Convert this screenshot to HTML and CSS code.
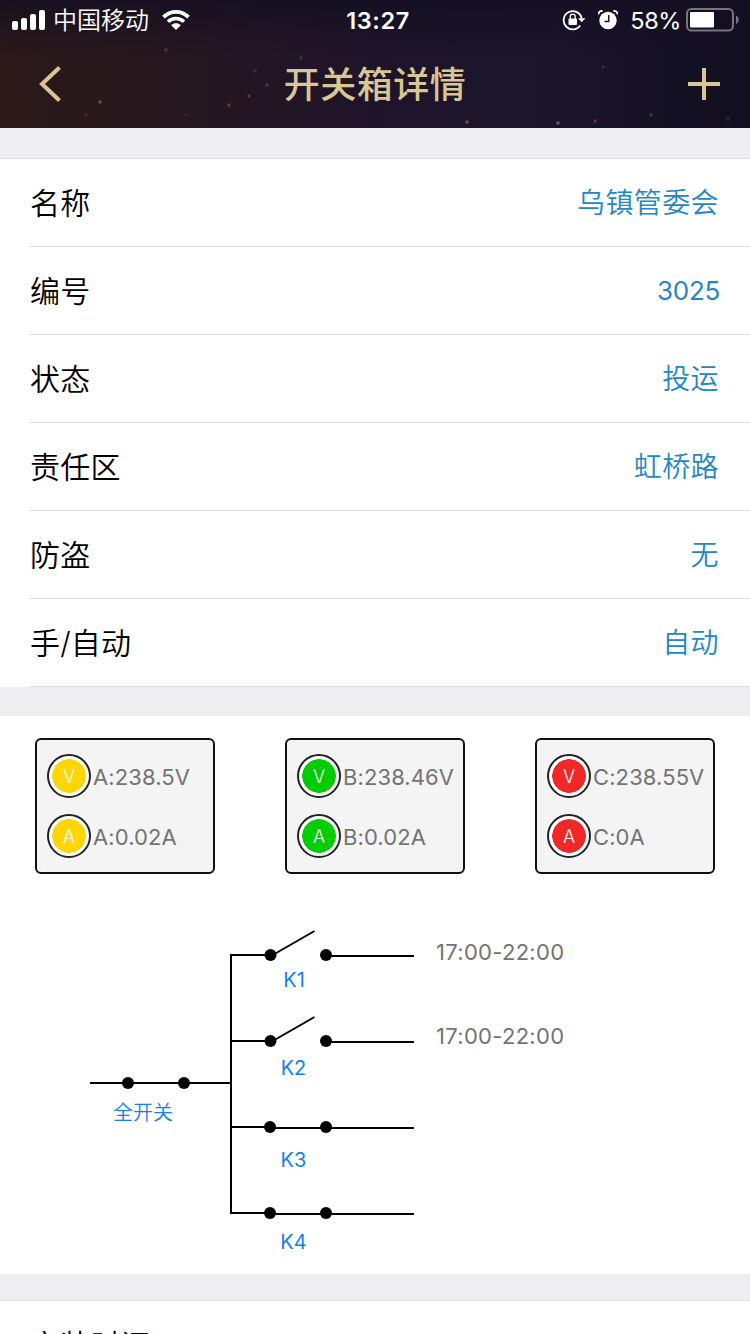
FILE: index.html
```
<!DOCTYPE html>
<html lang="zh-CN">
<head>
    <meta charset="UTF-8">
    <meta name="viewport" content="width=device-width, initial-scale=1.0">
    <title>开关箱详情</title>
    <link rel="stylesheet" href="styles.css">
</head>
<body>
    <header class="header">
        <div class="status-bar">
            <div class="status-left">
                <svg class="signal" width="34" height="20" viewBox="0 0 34 20" fill="#fff">
                    <rect x="0" y="11" width="6" height="9" rx="2"/>
                    <rect x="9" y="8" width="6" height="12" rx="2"/>
                    <rect x="18" y="4" width="6" height="16" rx="2"/>
                    <rect x="27" y="0" width="6" height="20" rx="2"/>
                </svg>
                <span class="carrier">中国移动</span>
                <svg class="wifi" width="28" height="20" viewBox="0 0 28 20">
                    <path d="M1.500 7.200C8.500 0.200 19.500 0.200 26.500 7.200" fill="none" stroke="#fff" stroke-width="3.800"/>
                    <path d="M6 11.700C10.500 7.400 17.500 7.400 22 11.700" fill="none" stroke="#fff" stroke-width="3.600"/>
                    <path d="M9.200 15.200C12 12.700 16 12.700 18.800 15.200L14 20Z" fill="#fff"/>
                </svg>
            </div>
            <span class="clock">13:27</span>
            <div class="status-right">
                <svg width="24" height="22" viewBox="0 0 24 22">
                    <path d="M18.200 16.500A9.100 9.100 0 1 1 19.700 9.500" fill="none" stroke="#fff" stroke-width="1.800"/>
                    <path d="M16 9.200H23.500L19.700 13.200Z" fill="#fff"/>
                    <rect x="6.500" y="9.500" width="8.500" height="6.500" rx="1" fill="#fff"/>
                    <path d="M8.300 10V7.500A2.450 2.450 0 0 1 13.200 7.500V10" fill="none" stroke="#fff" stroke-width="1.300"/>
                </svg>
                <svg class="alarm" width="20" height="20" viewBox="0 0 20 20">
                    <circle cx="10" cy="10.500" r="8.700" fill="#fff"/>
                    <path d="M0.600 4.400C0.500 1.800 2.200 0.600 4.600 1.100M19.400 4.400C19.500 1.800 17.800 0.600 15.400 1.100" fill="none" stroke="#fff" stroke-width="1.800"/>
                    <path d="M10.700 5V11.500H6.500" fill="none" stroke="#1a1429" stroke-width="1.500"/>
                </svg>
                <span class="percent">58%</span>
                <svg class="battery" width="53" height="24" viewBox="0 0 53 24">
                    <rect x="1" y="1" width="46" height="21.500" rx="4.500" fill="none" stroke="#77747f" stroke-width="2"/>
                    <rect x="4" y="4" width="24" height="15.500" rx="1" fill="#fff"/>
                    <path d="M50 7.500C53.600 9 53.600 14.500 50 16Z" fill="#77747f"/>
                </svg>
            </div>
        </div>
        <nav class="nav-bar">
            <svg width="24" height="38" viewBox="0 0 24 38">
                <path d="M21.500 2.500L4 19L21.500 35.500" fill="none" stroke="#d9c693" stroke-width="4"/>
            </svg>
            <h1>开关箱详情</h1>
            <svg width="32" height="32" viewBox="0 0 32 32">
                <path d="M0 16H32M16 0V32" stroke="#d9c693" stroke-width="4"/>
            </svg>
        </nav>
    </header>

    <ul class="list">
        <li><span>名称</span><span class="value">乌镇管委会</span></li>
        <li><span>编号</span><span class="value number">3025</span></li>
        <li><span>状态</span><span class="value">投运</span></li>
        <li><span>责任区</span><span class="value">虹桥路</span></li>
        <li><span>防盗</span><span class="value">无</span></li>
        <li><span>手/自动</span><span class="value">自动</span></li>
    </ul>

    <section class="panel">
        <div class="meters">
            <div class="meter yellow">
                <div class="reading"><i>V</i><span>A:238.5V</span></div>
                <div class="reading"><i>A</i><span>A:0.02A</span></div>
            </div>
            <div class="meter green">
                <div class="reading"><i>V</i><span>B:238.46V</span></div>
                <div class="reading"><i>A</i><span>B:0.02A</span></div>
            </div>
            <div class="meter red">
                <div class="reading"><i>V</i><span>C:238.55V</span></div>
                <div class="reading"><i>A</i><span>C:0A</span></div>
            </div>
        </div>

        <svg class="circuit" width="750" height="400" viewBox="0 874 750 400">
            <!-- wires -->
            <g class="wire">
                <path d="M90 1083H231"/>
                <path d="M270 955H231V1213H270"/>
                <path d="M231 1041H270M231 1127H270"/>
                <path d="M326 956H414M326 1042H414"/>
                <path d="M270 1128H414M270 1214H414"/>
                <path d="M271 956L314.500 931M271 1042L314.500 1017"/>
            </g>
            <!-- contacts -->
            <g>
                <circle cx="128" cy="1083" r="6"/>
                <circle cx="184" cy="1083" r="6"/>
                <circle cx="270.500" cy="955" r="6"/>
                <circle cx="326" cy="955" r="6"/>
                <circle cx="270.500" cy="1041" r="6"/>
                <circle cx="326" cy="1041" r="6"/>
                <circle cx="270" cy="1127" r="6"/>
                <circle cx="326" cy="1127" r="6"/>
                <circle cx="270" cy="1213" r="6"/>
                <circle cx="326" cy="1213" r="6"/>
            </g>
            <g class="switch-name">
                <text class="main-switch" x="143" y="1120">全开关</text>
                <text x="294" y="987">K1</text>
                <text x="293.500" y="1075">K2</text>
                <text x="293.500" y="1167">K3</text>
                <text x="293.500" y="1249">K4</text>
            </g>
            <g class="switch-time">
                <text x="436" y="960">17:00-22:00</text>
                <text x="436" y="1044">17:00-22:00</text>
            </g>
        </svg>
    </section>

    <ul class="list">
        <li><span>安装时间</span></li>
    </ul>
</body>
</html>
```
FILE: styles.css
```
* { box-sizing: border-box; }
html { height: 1334px; overflow: hidden; }
body { width: 750px; height: 1334px; margin: 0; overflow: hidden; background-color: #eeedf2; color: #000; font-family: Inter, "Noto Sans CJK SC", sans-serif; }
svg { display: block; flex: none; }

.header {
    height: 128px;
    color: #fff;
    background:
        radial-gradient(circle at 100px 102px, #a45740 0, #a4574000 2.5px),
        radial-gradient(circle at 166px 50px, #62403a 0, #62403a00 2.5px),
        radial-gradient(circle at 229px 105px, #754738 0, #75473800 2.5px),
        radial-gradient(circle at 249px 96px, #754738 0, #75473800 2.5px),
        radial-gradient(circle at 86px 115px, #5b342f 0, #5b342f00 2px),
        radial-gradient(circle at 186px 115px, #50302f 0, #50302f00 2px),
        radial-gradient(circle at 267px 85px, #623d38 0, #623d3800 2.5px),
        radial-gradient(circle at 301px 58px, #573636 0, #57363600 2.5px),
        radial-gradient(circle at 255px 71px, #573636 0, #57363600 2.5px),
        radial-gradient(circle at 467px 122px, #95604e 0, #95604e00 2.5px),
        radial-gradient(circle at 558px 123px, #c9683c 0, #c9683c00 2.5px),
        radial-gradient(circle at 595px 121px, #7e4030 0, #7e403000 2.5px),
        radial-gradient(circle at 651px 115px, #6b3e35 0, #6b3e3500 2.5px),
        radial-gradient(circle at 603px 67px, #453449 0, #45344900 2.5px),
        radial-gradient(circle at 728px 119px, #463142 0, #46314200 2.5px),
        linear-gradient(180deg, #140f22cc 0, #140f2200 60px),
        linear-gradient(90deg, #2b1919 0, #25171f 200px, #1e142a 370px, #1b152c 550px, #120f20 100%);
}
.status-bar { display: grid; grid-template-columns: 1fr auto 1fr; align-items: center; height: 40px; padding: 0 12px; }
.status-left, .status-right { display: flex; align-items: center; }
.status-right { justify-content: flex-end; }
.carrier { margin-left: 7px; padding-top: 2px; font-size: 24px; line-height: 38px; font-weight: 350; }
.wifi { margin-left: 13px; }
.clock { width: 68px; margin-left: 6px; text-align: center; font-size: 23.5px; font-weight: 600; letter-spacing: 0.6px; }
.alarm { margin-left: 12px; }
.percent { margin-left: 12px; padding-top: 2px; font-size: 23.5px; line-height: 38px; letter-spacing: -0.4px; }
.battery { margin: 0 -1px 0 5px; }

.nav-bar { display: flex; justify-content: space-between; align-items: center; height: 88px; padding: 0 30px 0 38px; }
.nav-bar h1 { margin: 0; padding-bottom: 4px; font-size: 36px; font-weight: 500; letter-spacing: 0.5px; color: #d9c693; }

.list { margin: 30px 0 0; padding: 0; list-style: none; background-color: #fff; border-top: 1px solid #e0e0e3; }
.list li { display: flex; justify-content: space-between; align-items: center; height: 88px; margin-left: 29px; padding: 0 30px 4px 1px; border-bottom: 1px solid #e0e0e3; font-size: 30px; font-weight: 350; letter-spacing: 0.2px; }
.value { margin-right: 1px; color: #2685c4; font-size: 28px; font-weight: 350; letter-spacing: 0.4px; }
.number { margin-right: 0; padding-top: 3px; font-size: 26px; font-weight: 400; letter-spacing: -0.3px; }

.panel { height: 558px; margin-top: 29px; background-color: #fff; }
.list + .panel + .list { margin-top: 26px; }
.meters { display: flex; justify-content: space-between; padding: 22px 35px 0; }
.meter { width: 180px; height: 136px; padding: 14px 0 0 10px; border: 2px solid #111; border-radius: 6px; background-color: #f4f4f4; }
.reading { display: flex; align-items: center; height: 44px; margin-bottom: 16px; font-size: 22px; color: #737373; white-space: nowrap; }
.reading span { margin-left: 2px; padding-top: 2px; letter-spacing: 0.1px; }
.reading i { display: flex; flex: none; align-items: center; justify-content: center; width: 44px; height: 44px; border: 2px solid #222; border-radius: 50%; font-size: 18px; font-style: normal; font-weight: 300; color: #fff; }
.yellow i { background: radial-gradient(circle, #ffd600 16.5px, #fff 17px); }
.green i { background: radial-gradient(circle, #00cd00 16.5px, #fff 17px); }
.red i { background: radial-gradient(circle, #f22727 16.5px, #fff 17px); }

.wire { fill: none; stroke: #000; stroke-width: 2; }
.switch-name { fill: #1680eb; font-size: 20px; text-anchor: middle; }
.main-switch { font-weight: 350; }
.switch-time { fill: #737373; font-size: 22px; letter-spacing: 0.3px; }
```
